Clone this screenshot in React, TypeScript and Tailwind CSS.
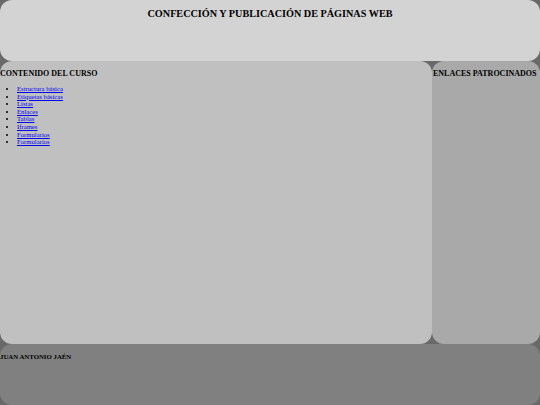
const links = [
  "Estructura básica",
  "Etiquetas básicas",
  "Listas",
  "Enlaces",
  "Tablas",
  "Iframes",
  "Formularios",
  "Formularios",
];

export default function App() {
  return (
    <div
      className="flex h-[405px] w-[540px] flex-col bg-[#696969] text-black"
      style={{ fontFamily: '"Liberation Serif", "Times New Roman", serif' }}
    >
      {/* cabecera */}
      <header className="h-[61px] shrink-0 rounded-[12px] bg-[#d3d3d3] pt-[8px] text-center">
        <h1 className="text-[10.2px] leading-[12px] font-bold">
          CONFECCIÓN Y PUBLICACIÓN DE PÁGINAS WEB
        </h1>
      </header>

      <div className="flex min-h-0 flex-1">
        {/* contenido */}
        <main className="w-[432px] shrink-0 rounded-[12px] bg-[#c0c0c0]">
          <h2 className="mt-[8px] text-[8px] leading-[10px] font-bold">
            CONTENIDO DEL CURSO
          </h2>
          <ul className="mt-[6px] list-disc pl-[17px] text-[6.7px] leading-[7.6px]">
            {links.map((l, i) => (
              <li key={i}>
                <a href="#" className="text-[#0000ee] underline">
                  {l}
                </a>
              </li>
            ))}
          </ul>
        </main>

        {/* enlaces */}
        <aside className="flex-1 rounded-[12px] bg-[#a9a9a9] pl-px">
          <h2 className="mt-[8px] whitespace-nowrap text-[8px] leading-[10px] font-bold">
            ENLACES PATROCINADOS
          </h2>
        </aside>
      </div>

      {/* pie */}
      <footer className="h-[61px] shrink-0 rounded-[12px] bg-[#808080] pt-[9px]">
        <h3 className="text-[6.8px] leading-[8px] font-bold">JUAN ANTONIO JAÉN</h3>
      </footer>
    </div>
  );
}
